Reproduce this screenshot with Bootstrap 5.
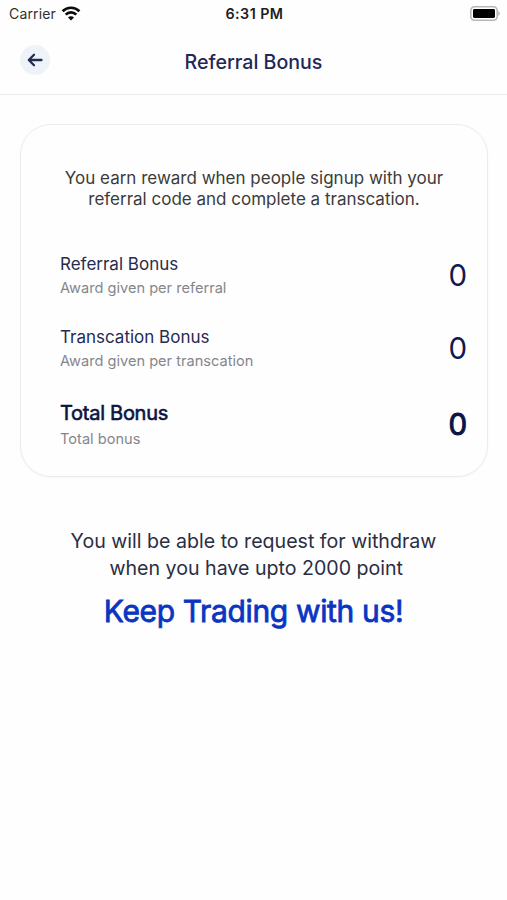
<!DOCTYPE html>
<html lang="en">
<head>
<meta charset="utf-8">
<meta name="viewport" content="width=device-width, initial-scale=1">
<title>Referral Bonus</title>
<link href="https://cdn.jsdelivr.net/npm/bootstrap@5.3.0/dist/css/bootstrap.min.css" rel="stylesheet">
<style>
body { font-family: Inter, "Liberation Sans", sans-serif; color: #262b44; background: #fefefe; }
.screen { min-height: 900px; }
.side { flex: 1 1 0; }
.status-bar { height: 27px; padding: 0 7px 0 9px; font-size: 14px; line-height: 27px; color: #303030; }
.carrier { letter-spacing: .15px; }
.status-time { font-size: 14.3px; letter-spacing: .45px; font-weight: 600; color: #1c1c1c; }
.top-bar { height: 68px; padding: 0 20px; border-bottom: 1px solid #e9eaec; }
.back-btn { width: 30px; height: 30px; background: #edf3f8; margin-top: -1px; }
.top-title { font-size: 19.6px; font-weight: 450; line-height: 24px; color: #1f2858; padding-top: 2px; }
.bonus-card { margin: 29px 19px 0 20px; height: 353px; padding: 43px 20px 0 39px; border: 1px solid #e9edf0; border-radius: 31px; background: #fefefe; box-shadow: 0 1px 2px rgba(60,80,90,.04); }
.intro { font-size: 17px; line-height: 21px; color: #3b3b3b; margin-right: 19px; }
.bonus-name { font-size: 17px; line-height: 24px; color: #262b50; }
.bonus-note { font-size: 14.6px; line-height: 24px; color: #85868c; }
.bonus-value { font-size: 29.5px; line-height: 34px; margin-bottom: 2px; color: #111a52; }
.row-referral { margin-top: 42px; height: 48px; }
.row-transaction { margin-top: 25px; height: 48px; }
.row-total { margin-top: 26px; height: 52px; }
.row-total .bonus-name { font-size: 20px; letter-spacing: -.27px; line-height: 28px; color: #0d1440; -webkit-text-stroke: .6px #0d1440; }
.row-total .bonus-value { color: #0b1345; margin-bottom: 2px; -webkit-text-stroke: 1px #0b1345; }
.withdraw { margin-top: 51px; font-size: 19.6px; line-height: 27px; color: #2b2e42; }
.slogan { font-size: 30px; letter-spacing: -.35px; line-height: 40px; margin-top: 9px; color: #0a35c2; -webkit-text-stroke: .8px #0a35c2; }
</style>
<script src="https://cdn.jsdelivr.net/npm/bootstrap@5.3.0/dist/js/bootstrap.bundle.min.js"></script>
</head>
<body>
<div class="screen d-flex flex-column">
  <div class="status-bar d-flex align-items-center">
    <div class="side d-flex align-items-center">
      <span class="carrier">Carrier</span>
      <svg class="ms-1" width="22" height="16" viewBox="0 0 22 16" fill="none" stroke="#0c0c0c" stroke-width="2.7">
        <path d="M2.6 5.2a12 12 0 0 1 16.8 0M5.7 8.6a7.5 7.5 0 0 1 10.6 0"/>
        <path d="M11 14.6 8 11.5a4.2 4.2 0 0 1 6 0z" fill="#0c0c0c" stroke="none"/>
      </svg>
    </div>
    <span class="status-time">6:31 PM</span>
    <div class="side d-flex justify-content-end">
      <svg width="30" height="15" viewBox="0 0 30 15">
        <rect x=".8" y=".8" width="26.4" height="13.4" rx="3.8" fill="#fff" stroke="#b7b7b7" stroke-width="1.6"/>
        <rect x="3" y="3" width="22" height="9" rx="1.4" fill="#000"/>
        <path d="M28.3 5.2c2 .6 2 4 0 4.6z" fill="#b0b0b0"/>
      </svg>
    </div>
  </div>
  <header class="top-bar d-flex align-items-center">
    <div class="side">
      <button type="button" class="back-btn btn rounded-circle border-0 p-0 d-flex align-items-center justify-content-center" aria-label="Back">
        <svg width="16" height="14" viewBox="0 0 16 14" fill="none" stroke="#232b50" stroke-width="2.3" stroke-linecap="round" stroke-linejoin="round"><path d="M14.5 7H2M7 1.8 1.8 7 7 12.2"/></svg>
      </button>
    </div>
    <h1 class="top-title mb-0">Referral Bonus</h1>
    <div class="side"></div>
  </header>
  <main>
    <section class="bonus-card">
      <p class="intro text-center mb-0">You earn reward when people signup with your<br>referral code and complete a transcation.</p>
      <div class="row-referral d-flex justify-content-between align-items-center">
        <div><div class="bonus-name">Referral Bonus</div><div class="bonus-note">Award given per referral</div></div>
        <div class="bonus-value">0</div>
      </div>
      <div class="row-transaction d-flex justify-content-between align-items-center">
        <div><div class="bonus-name">Transcation Bonus</div><div class="bonus-note">Award given per transcation</div></div>
        <div class="bonus-value">0</div>
      </div>
      <div class="row-total d-flex justify-content-between align-items-center">
        <div><div class="bonus-name">Total Bonus</div><div class="bonus-note">Total bonus</div></div>
        <div class="bonus-value">0</div>
      </div>
    </section>
    <p class="withdraw text-center mb-0">You will be able to request for withdraw<br>&nbsp;when you have upto 2000 point</p>
    <p class="slogan text-center mb-0">Keep Trading with us!</p>
  </main>
</div>
</body>
</html>
